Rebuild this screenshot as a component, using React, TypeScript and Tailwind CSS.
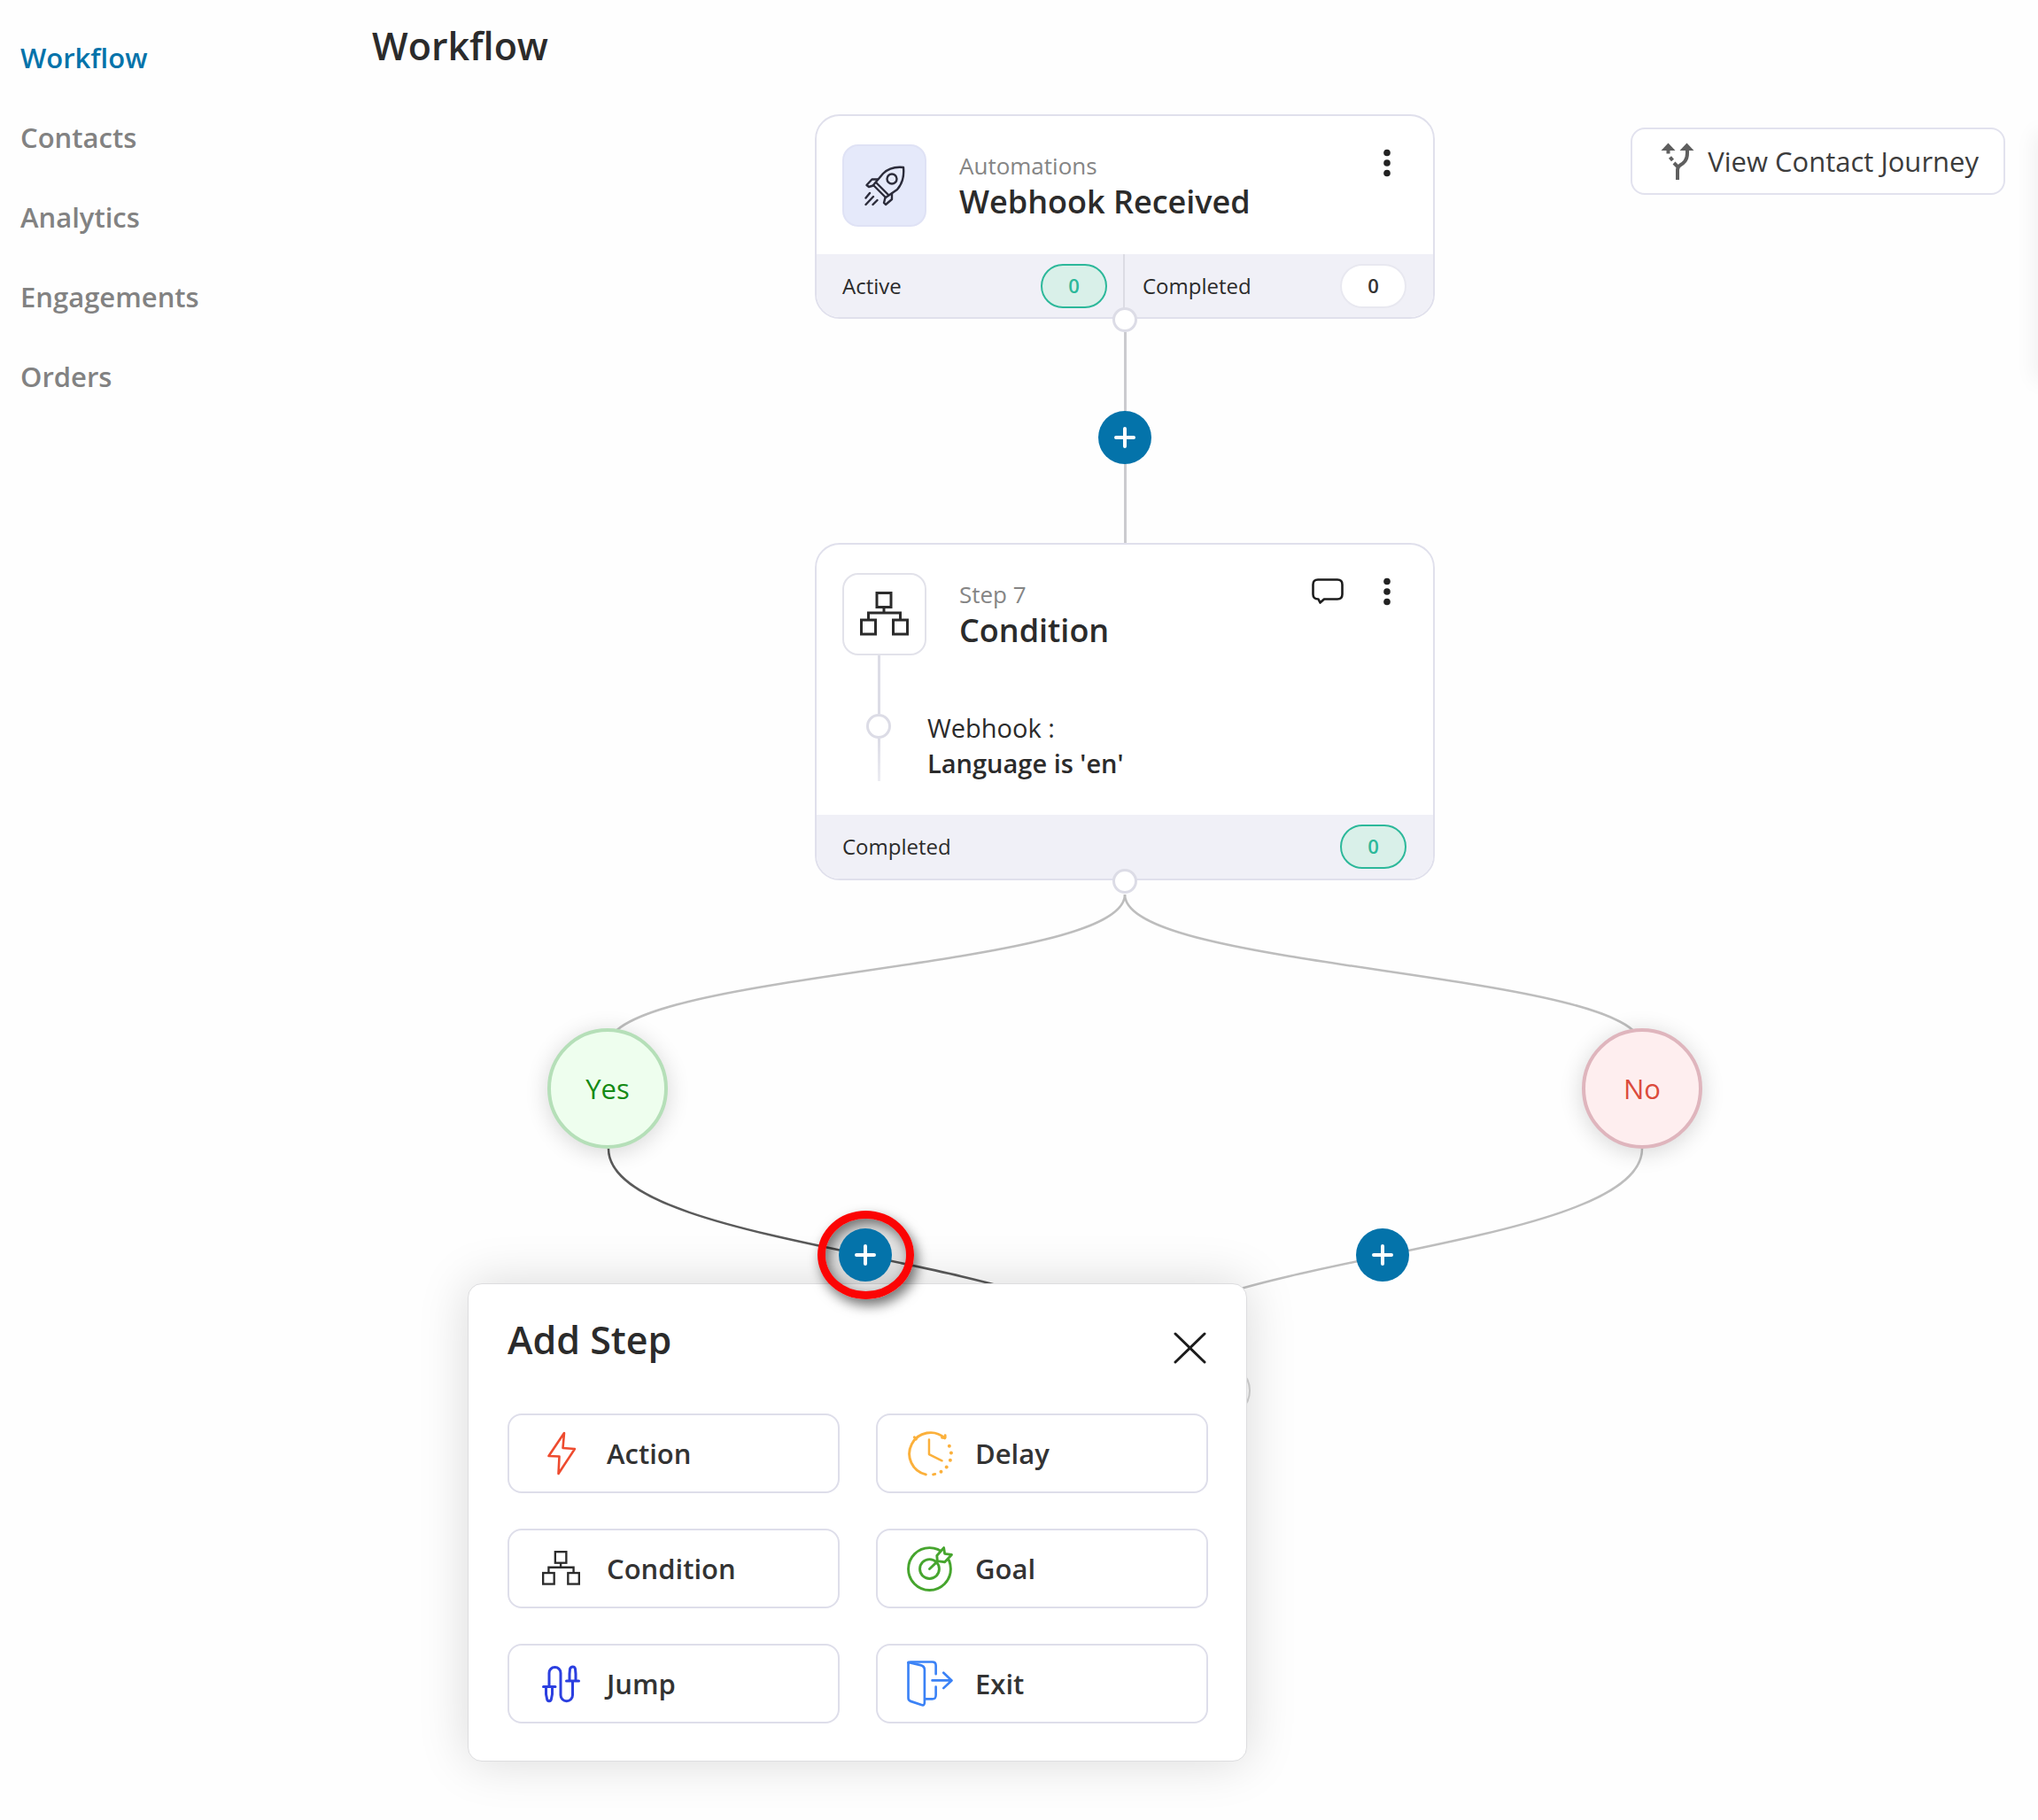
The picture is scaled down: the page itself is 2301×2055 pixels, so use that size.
import type { ReactNode } from "react";

const NAV = ["Workflow", "Contacts", "Analytics", "Engagements", "Orders"];

function RocketIcon() {
  return (
    <svg width="46" height="46" viewBox="0 0 46 46" fill="none" stroke="#2b2b3a" strokeWidth="2.4" strokeLinecap="round" strokeLinejoin="round">
      <path d="M44 2C35 1 27 3 21 9L10 22L24 36L37 27C43 20 45 12 44 2Z" />
      <path d="M13 19L27 33" />
      <circle cx="31" cy="15" r="5.5" />
      <path d="M15 15.5H8.500L2.500 22L5 24L10 22.500" />
      <path d="M31 31.500V38L24 44L22 42L23.500 36" />
      <path d="M6 31L1.500 36.500M10 35L1.500 44M14.500 39L9.500 44" />
    </svg>
  );
}

function TreeIcon({ size }: { size: number }) {
  return (
    <svg width={size} height={size * 0.91} viewBox="0 0 55 50" fill="none" stroke="#2b2b2b" strokeWidth="3">
      <rect x="19" y="1.500" width="16" height="16" />
      <rect x="1.500" y="32" width="16" height="16" />
      <rect x="37.500" y="32" width="16" height="16" />
      <path d="M27 17.500V24M9.500 32V24H45.500V32" />
    </svg>
  );
}

function BoltIcon() {
  return (
    <svg width="32" height="50" viewBox="0 0 32 50" fill="none" stroke="#ee4b2f" strokeWidth="2.6" strokeLinejoin="round">
      <path d="M19 2L17.500 19L31 20L12.500 48L13.500 28.500L1.500 28Z" />
    </svg>
  );
}

function ClockIcon() {
  return (
    <svg width="52" height="52" viewBox="0 0 50 50" fill="none" stroke="#fbb03b" strokeWidth="2.8" strokeLinecap="round" strokeLinejoin="round">
      <path d="M41 8.500A23 23 0 1 0 20.500 48" />
      <path d="M24 10V26L38 33" strokeWidth="2.4" />
      <path d="M38 8H41.500V5.500M8 7.500L10 9.500" />
      <g fill="#fbb03b" stroke="none">
        <circle cx="46" cy="17" r="1.900" />
        <circle cx="48" cy="24.500" r="1.900" />
        <circle cx="47" cy="32.500" r="1.900" />
        <circle cx="43" cy="40" r="1.900" />
        <circle cx="37" cy="45" r="1.900" />
      </g>
      <path d="M28.500 48L30.500 47.500" />
    </svg>
  );
}

function GoalIcon() {
  return (
    <svg width="52" height="52" viewBox="0 0 50 50" fill="none" stroke="#46a52e" strokeWidth="2.800" strokeLinecap="round" strokeLinejoin="round">
      <circle cx="24.500" cy="25.500" r="23" />
      <circle cx="24.500" cy="25.500" r="10.500" />
      <path d="M24.500 25.500L36 14.500" />
      <path d="M33 17L32.500 11L40 2.500L41 9L48.500 10L41 18Z" fill="#fff" />
    </svg>
  );
}

function JumpIcon() {
  return (
    <svg width="43" height="43" viewBox="0 0 43 43" fill="none" stroke="#2b3fe0" strokeWidth="3" strokeLinecap="round" strokeLinejoin="round">
      <path d="M1.500 24.500H15M4.500 24.500V33L5.500 38C6 41.500 10 41.500 10.500 38L11.500 33V24.500" />
      <path d="M8 24V9A6.500 6.500 0 0 1 21 9V34A6.500 6.500 0 0 0 34.500 34V18.500" />
      <path d="M27.500 18H41.500M31 18V10L31.500 4.500C32.500 1 37 1 37.500 4.500L38 10V18" />
    </svg>
  );
}

function ExitIcon() {
  return (
    <svg width="52" height="52" viewBox="0 0 51 51" fill="none" stroke="#3b82f6" strokeWidth="2.600" strokeLinecap="round" strokeLinejoin="round">
      <path d="M1.500 2L15 5C18 5.800 19.500 7 19.500 10V46C19.500 49 18.500 50 16 49L4 45C2 44.300 1.500 43.500 1.500 41.500Z" />
      <path d="M1.500 2.500C1.500 1.500 2 1.500 4 1.500H28C31 1.500 32 3 32 5.500V15M32 29V38C32 41.500 31 42.500 28 42.500H20" />
      <path d="M28 22H49M40.500 13.500L49.500 22L40.500 30.500" />
    </svg>
  );
}

function ForkIcon() {
  return (
    <svg width="38" height="43" viewBox="0 0 38 43" fill="none" stroke="#5f5f5f" strokeWidth="4">
      <path d="M0.500 9L8.500 0.500L16.500 9ZM21.500 9L29.500 0.500L37.500 9Z" fill="#5f5f5f" stroke="none" />
      <path d="M30 8V12C30 20 26 23 22 25.500C20 27 19 28.500 19 31V42" />
      <path d="M8.500 8V12.500M10.500 16.500L13.500 20M15 23L19 27" />
    </svg>
  );
}

function ChatIcon() {
  return (
    <svg width="36" height="30" viewBox="0 0 36 30" fill="none" stroke="#1c1c1c" strokeWidth="2.600" strokeLinejoin="round">
      <path d="M7 1.500H29Q34.500 1.500 34.500 7V18Q34.500 23.500 29 23.500H14L9.500 27.500L7.500 23.500Q1.500 23.500 1.500 18V7Q1.500 1.500 7 1.500Z" />
    </svg>
  );
}

function MoreButton() {
  return (
    <button type="button" aria-label="More options" className="flex h-[42px] w-6 items-center justify-center">
      <svg width="8" height="32" viewBox="0 0 8 32" fill="#222">
        <circle cx="4" cy="4.500" r="3.800" />
        <circle cx="4" cy="16" r="3.800" />
        <circle cx="4" cy="27.500" r="3.800" />
      </svg>
    </button>
  );
}

function AddButton({ className = "" }: { className?: string }) {
  return (
    <button
      type="button"
      aria-label="Add step"
      className={`flex size-15 items-center justify-center rounded-full bg-[#0473aa] ${className}`}
    >
      <svg width="26" height="26" viewBox="0 0 26 26" stroke="#fff" strokeWidth="4" strokeLinecap="round">
        <path d="M13 3V23M3 13H23" />
      </svg>
    </button>
  );
}

function Port() {
  return <span className="absolute -bottom-[17px] left-1/2 size-7 -translate-x-1/2 rounded-full border-3 border-[#dcdce6] bg-white" />;
}

function Pill({ green = false }: { green?: boolean }) {
  return (
    <span
      className={
        green
          ? "flex h-[50px] w-[75px] items-center justify-center rounded-full border-2 border-[#2cb89a] bg-[#d9f0e9] text-[22px] font-semibold text-[#2cb89a]"
          : "flex h-[50px] w-[75px] items-center justify-center rounded-full border-2 border-[#e8e8f0] bg-white text-[22px] font-semibold text-[#333]"
      }
    >
      0
    </span>
  );
}

function CardHead({ icon, tinted, sub, title, children }: { icon: ReactNode; tinted?: boolean; sub: string; title: string; children: ReactNode }) {
  return (
    <div className="flex items-start pt-8 pr-10 pl-[29px]">
      <div
        className={
          tinted
            ? "flex h-[93px] w-[95px] items-center justify-center rounded-[18px] border-2 border-[#dfe2f5] bg-[#e5e9fa]"
            : "flex h-[93px] w-[95px] items-center justify-center rounded-[18px] border-2 border-[#e2e2ea] bg-white"
        }
      >
        {icon}
      </div>
      <div className="ml-[37px] flex-1 pt-1.5">
        <p className="text-[26px] leading-9 text-[#858585]">{sub}</p>
        <h2 className="text-[36px] leading-[46px] font-semibold text-[#2b2b2b]">{title}</h2>
      </div>
      <div className="flex items-center gap-[37px]">{children}</div>
    </div>
  );
}

function StepButton({ icon, label }: { icon: ReactNode; label: string }) {
  return (
    <button type="button" className="flex h-[90px] items-center gap-[25px] rounded-2xl border-2 border-[#dedeea] bg-white pl-8 text-[31px] font-semibold text-[#333]">
      <span className="flex w-[53px] items-center justify-center">{icon}</span>
      {label}
    </button>
  );
}

export default function App() {
  return (
    <div className="relative flex min-h-screen overflow-hidden bg-[#fefefe] font-['Open_Sans',sans-serif]">
      <nav className="w-[239px] shrink-0 pt-5 pl-[23px]">
        <ul>
          {NAV.map((item, i) => (
            <li key={item}>
              <a
                href="#"
                className={
                  i === 0
                    ? "block h-[90px] text-[31px] leading-[90px] font-semibold text-[#0473aa]"
                    : "block h-[90px] text-[31px] leading-[90px] font-semibold text-[#828282]"
                }
              >
                {item}
              </a>
            </li>
          ))}
        </ul>
      </nav>

      <main className="relative min-w-0 flex-1">
        <h1 className="h-[129px] pt-6 pl-[181px] text-[43px] leading-[56px] font-semibold text-[#2b2b2b]">Workflow</h1>

        <button
          type="button"
          className="absolute top-36 right-[37px] flex h-[76px] items-center gap-[15px] rounded-2xl border-2 border-[#e2e2ee] bg-white pr-7 pl-8 text-[31px] text-[#3c3c3c]"
        >
          <ForkIcon />
          View Contact Journey
        </button>

        <div className="flex flex-col items-center">
          <section className="relative w-[700px] rounded-[28px] border-2 border-[#e0e0ec] bg-white">
            <CardHead tinted icon={<RocketIcon />} sub="Automations" title="Webhook Received">
              <MoreButton />
            </CardHead>
            <div className="mt-[31px] grid h-[71px] grid-cols-2 rounded-b-[26px] bg-[#f0f0f7] text-2xl text-[#2b2b2b]">
              <div className="flex items-center justify-between border-r-2 border-[#dcdce4] pr-[18px] pl-[29px]">
                Active
                <Pill green />
              </div>
              <div className="flex items-center justify-between pr-[30px] pl-5">
                Completed
                <Pill />
              </div>
            </div>
            <Port />
          </section>

          <div className="flex h-[253px] flex-col items-center pt-[15px]">
            <span className="h-[89px] w-[3px] bg-[#cbcbcf]" />
            <AddButton />
            <span className="w-[3px] flex-1 bg-[#cbcbcf]" />
          </div>

          <section className="relative w-[700px] rounded-[28px] border-2 border-[#e0e0ec] bg-white">
            <CardHead icon={<TreeIcon size={55} />} sub="Step 7" title="Condition">
              <button type="button" aria-label="Comment">
                <ChatIcon />
              </button>
              <MoreButton />
            </CardHead>
            <div className="flex h-[180px] pl-14">
              <div className="flex w-7 flex-col items-center">
                <span className="h-[66px] w-[3px] bg-[#dcdce6]" />
                <span className="size-7 rounded-full border-3 border-[#dcdce6] bg-white" />
                <span className="h-[48px] w-[3px] bg-gradient-to-b from-[#dcdce6] to-[#ececf2]" />
              </div>
              <div className="ml-[41px] pt-[62px] text-[29px] leading-10 text-[#2b2b2b]">
                <p>Webhook :</p>
                <p className="font-semibold">Language is 'en'</p>
              </div>
            </div>
            <div className="flex h-[72px] items-center justify-between rounded-b-[26px] bg-[#f0f0f7] pr-[30px] pl-[29px] text-2xl text-[#2b2b2b]">
              Completed
              <Pill green />
            </div>
            <Port />
          </section>

          {/* Branch canvas: node positions are diagram coordinates */}
          <div className="relative h-[1060px] w-[1500px]">
            <svg className="absolute inset-0" width="1500" height="700" viewBox="0 0 1500 700" fill="none" strokeWidth="2.500">
              <path d="M750 16C750 102 166 102 166 188" stroke="#bdbdbd" />
              <path d="M750 16C750 102 1334 102 1334 188" stroke="#bdbdbd" />
              <path d="M167 303C167 424 750 424 750 545" stroke="#5a5a5a" />
              <path d="M1334 303C1334 424 750 424 750 545" stroke="#bdbdbd" />
            </svg>

            <span className="absolute top-[546px] left-[608px] h-[60px] w-[284px] rounded-full border-2 border-[#d4d4d4] bg-white" />

            <div className="absolute top-[167px] left-[98px] flex size-[136px] items-center justify-center rounded-full border-4 border-[#b5dfb8] bg-[#eefeee] text-[31px] text-[#158a15] shadow-[0_4px_26px_rgba(0,0,0,0.16)]">
              Yes
            </div>
            <div className="absolute top-[167px] left-[1266px] flex size-[136px] items-center justify-center rounded-full border-4 border-[#dfb5bd] bg-[#feeeef] text-[31px] text-[#dc4b3c] shadow-[0_4px_26px_rgba(0,0,0,0.16)]">
              No
            </div>

            <AddButton className="absolute top-[393px] left-[1011px]" />

            <section className="absolute top-[455px] left-2 w-[880px] rounded-2xl border border-[#dddddf] bg-white pr-[43px] pb-[42px] pl-11 shadow-[0_0_56px_rgba(0,0,0,0.15)]">
              <div className="flex h-[146px] items-start justify-between pt-[35px]">
                <h2 className="text-[43px] leading-[56px] font-semibold text-[#2b2b2b]">Add Step</h2>
                <button type="button" aria-label="Close" className="mt-[19px]">
                  <svg width="40" height="36" viewBox="0 0 40 36" stroke="#1c1c1c" strokeWidth="3" strokeLinecap="round">
                    <path d="M3 2L36 34M36 2L3 34" />
                  </svg>
                </button>
              </div>
              <div className="grid grid-cols-2 gap-x-[41px] gap-y-10">
                <StepButton icon={<BoltIcon />} label="Action" />
                <StepButton icon={<ClockIcon />} label="Delay" />
                <StepButton icon={<TreeIcon size={43} />} label="Condition" />
                <StepButton icon={<GoalIcon />} label="Goal" />
                <StepButton icon={<JumpIcon />} label="Jump" />
                <StepButton icon={<ExitIcon />} label="Exit" />
              </div>
            </section>

            <span className="absolute top-[373px] left-[403px] h-[100px] w-[109px] rounded-[50%] border-9 border-[#fb0404] bg-black/10 shadow-[4px_7px_14px_rgba(0,0,0,0.55),inset_4px_6px_14px_rgba(0,0,0,0.5)]" />
            <AddButton className="absolute top-[393px] left-[427px]" />
          </div>
        </div>
      </main>

      <span className="absolute top-[150px] -right-3 h-[280px] w-3 shadow-[0_0_24px_rgba(0,0,0,0.1)]" />
    </div>
  );
}
